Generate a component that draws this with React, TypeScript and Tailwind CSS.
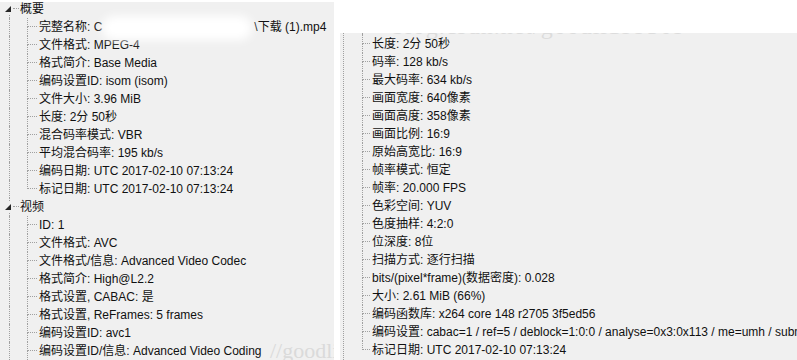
import React from "react";

const LINE = "border-[#a0a0a0] border-dotted";

function LeftChild({ children, last }: { children: React.ReactNode; last?: boolean }) {
  return (
    <div className="flex h-[18px] shrink-0">
      <div className="w-[9px]" />
      <div className={`w-[18px] border-l ${LINE}`} />
      <div className="w-[10px] flex flex-col">
        <div className={`h-[9px] border-l border-b ${LINE}`} />
        <div className={`h-[9px] ${last ? "" : `border-l ${LINE}`}`} />
      </div>
      <div className="pl-[2px] leading-[18px] whitespace-nowrap">{children}</div>
    </div>
  );
}

function RootRow({ label, first }: { label: string; first?: boolean }) {
  return (
    <div className="relative flex h-[18px] shrink-0">
      <div className="w-[9px]" />
      <div className="w-[11px] flex flex-col">
        <div className={`h-[9px] ${first ? "" : `border-l ${LINE}`}`} />
        <div className={`h-[9px] border-l ${LINE}`} />
      </div>
      <div className="leading-[18px] whitespace-nowrap">{label}</div>
      <span className={`absolute left-[13px] top-[8px] w-[6px] border-t ${LINE}`} />
      <span className="absolute left-[3px] top-[3px] w-[10px] h-[11px] bg-[#f0f0f0]">
        <svg width="10" height="11" viewBox="0 0 10 11">
          <polygon points="8,3 8,9 2,9" fill="#262626" />
        </svg>
      </span>
    </div>
  );
}

function RightChild({ children, last }: { children: React.ReactNode; last?: boolean }) {
  return (
    <div className="flex h-[18px] shrink-0">
      <div className="w-[8px] flex flex-col">
        <div className={`h-[9px] border-l border-b ${LINE}`} />
        <div className={`h-[9px] ${last ? "" : `border-l ${LINE}`}`} />
      </div>
      <div className="pl-[2px] leading-[18px] whitespace-nowrap">{children}</div>
    </div>
  );
}

const rightRows = [
  "长度: 2分 50秒",
  "码率: 128 kb/s",
  "最大码率: 634 kb/s",
  "画面宽度: 640像素",
  "画面高度: 358像素",
  "画面比例: 16:9",
  "原始高宽比: 16:9",
  "帧率模式: 恒定",
  "帧率: 20.000 FPS",
  "色彩空间: YUV",
  "色度抽样: 4:2:0",
  "位深度: 8位",
  "扫描方式: 逐行扫描",
  "bits/(pixel*frame)(数据密度): 0.028",
  "大小: 2.61 MiB (66%)",
  "编码函数库: x264 core 148 r2705 3f5ed56",
  "编码设置: cabac=1 / ref=5 / deblock=1:0:0 / analyse=0x3:0x113 / me=umh / subme=7 / psy=1 / psy_rd=1.00:0.00",
  "标记日期: UTC 2017-02-10 07:13:24",
];

const general = [
  "文件格式: MPEG-4",
  "格式简介: Base Media",
  "编码设置ID: isom (isom)",
  "文件大小: 3.96 MiB",
  "长度: 2分 50秒",
  "混合码率模式: VBR",
  "平均混合码率: 195 kb/s",
  "编码日期: UTC 2017-02-10 07:13:24",
  "标记日期: UTC 2017-02-10 07:13:24",
];

const video = [
  "ID: 1",
  "文件格式: AVC",
  "文件格式/信息: Advanced Video Codec",
  "格式简介: High@L2.2",
  "格式设置, CABAC: 是",
  "格式设置, ReFrames: 5 frames",
  "编码设置ID: avc1",
  "编码设置ID/信息: Advanced Video Coding",
];

export default function App() {
  return (
    <div
      className="w-[797px] h-[360px] bg-white flex overflow-hidden text-[12px] text-[#111]"
      style={{ fontFamily: '"Liberation Sans", "Noto Sans CJK SC", sans-serif' }}
    >
      {/* Left panel */}
      <div className="relative w-[334px] h-[358px] mt-[2px] bg-[#f0f0f0] overflow-hidden shrink-0">
        <div
          className="absolute left-[270px] top-[338px] text-[22px] leading-[22px] text-[#dadada] whitespace-nowrap"
          style={{ fontFamily: '"Liberation Serif", serif' }}
        >
          //goodli
        </div>
        <div className="relative flex flex-col mt-[-2px]">
          <RootRow label="概要" first />
          <LeftChild>
            <span className="relative">
              完整名称: C
              <span className="inline-block w-[152px]" />
              \下载 (1).mp4
            </span>
          </LeftChild>
          {general.map((t, i) => (
            <LeftChild key={t + i} last={i === general.length - 1}>
              {t}
            </LeftChild>
          ))}
          <RootRow label="视频" />
          {video.map((t, i) => (
            <LeftChild key={t + i}>{t}</LeftChild>
          ))}
        </div>
        <div className="absolute left-[102px] top-[14px] w-[150px] h-[24px] bg-white rounded-full blur-[5px]" />
      </div>

      {/* Right panel */}
      <div className="relative flex-1 mt-[33px] ml-[6px] bg-[#f0f0f0] overflow-hidden flex">
        <div
          className="absolute left-[52px] top-[-19px] text-[24px] leading-[24px] text-[#dcdcdc] whitespace-nowrap tracking-[1px]"
          style={{ fontFamily: '"Liberation Serif", serif' }}
        >
          blog.csdn.net/goodli199309
        </div>
        <div className="w-[3px] shrink-0" />
        <div className={`w-[19px] shrink-0 border-l ${LINE}`} />
        <div className="relative flex flex-col">
          <div className={`h-[2px] border-l ${LINE}`} />
          {rightRows.map((t, i) => (
            <RightChild key={t} last={i === rightRows.length - 1}>
              {t}
            </RightChild>
          ))}
        </div>
      </div>
    </div>
  );
}
